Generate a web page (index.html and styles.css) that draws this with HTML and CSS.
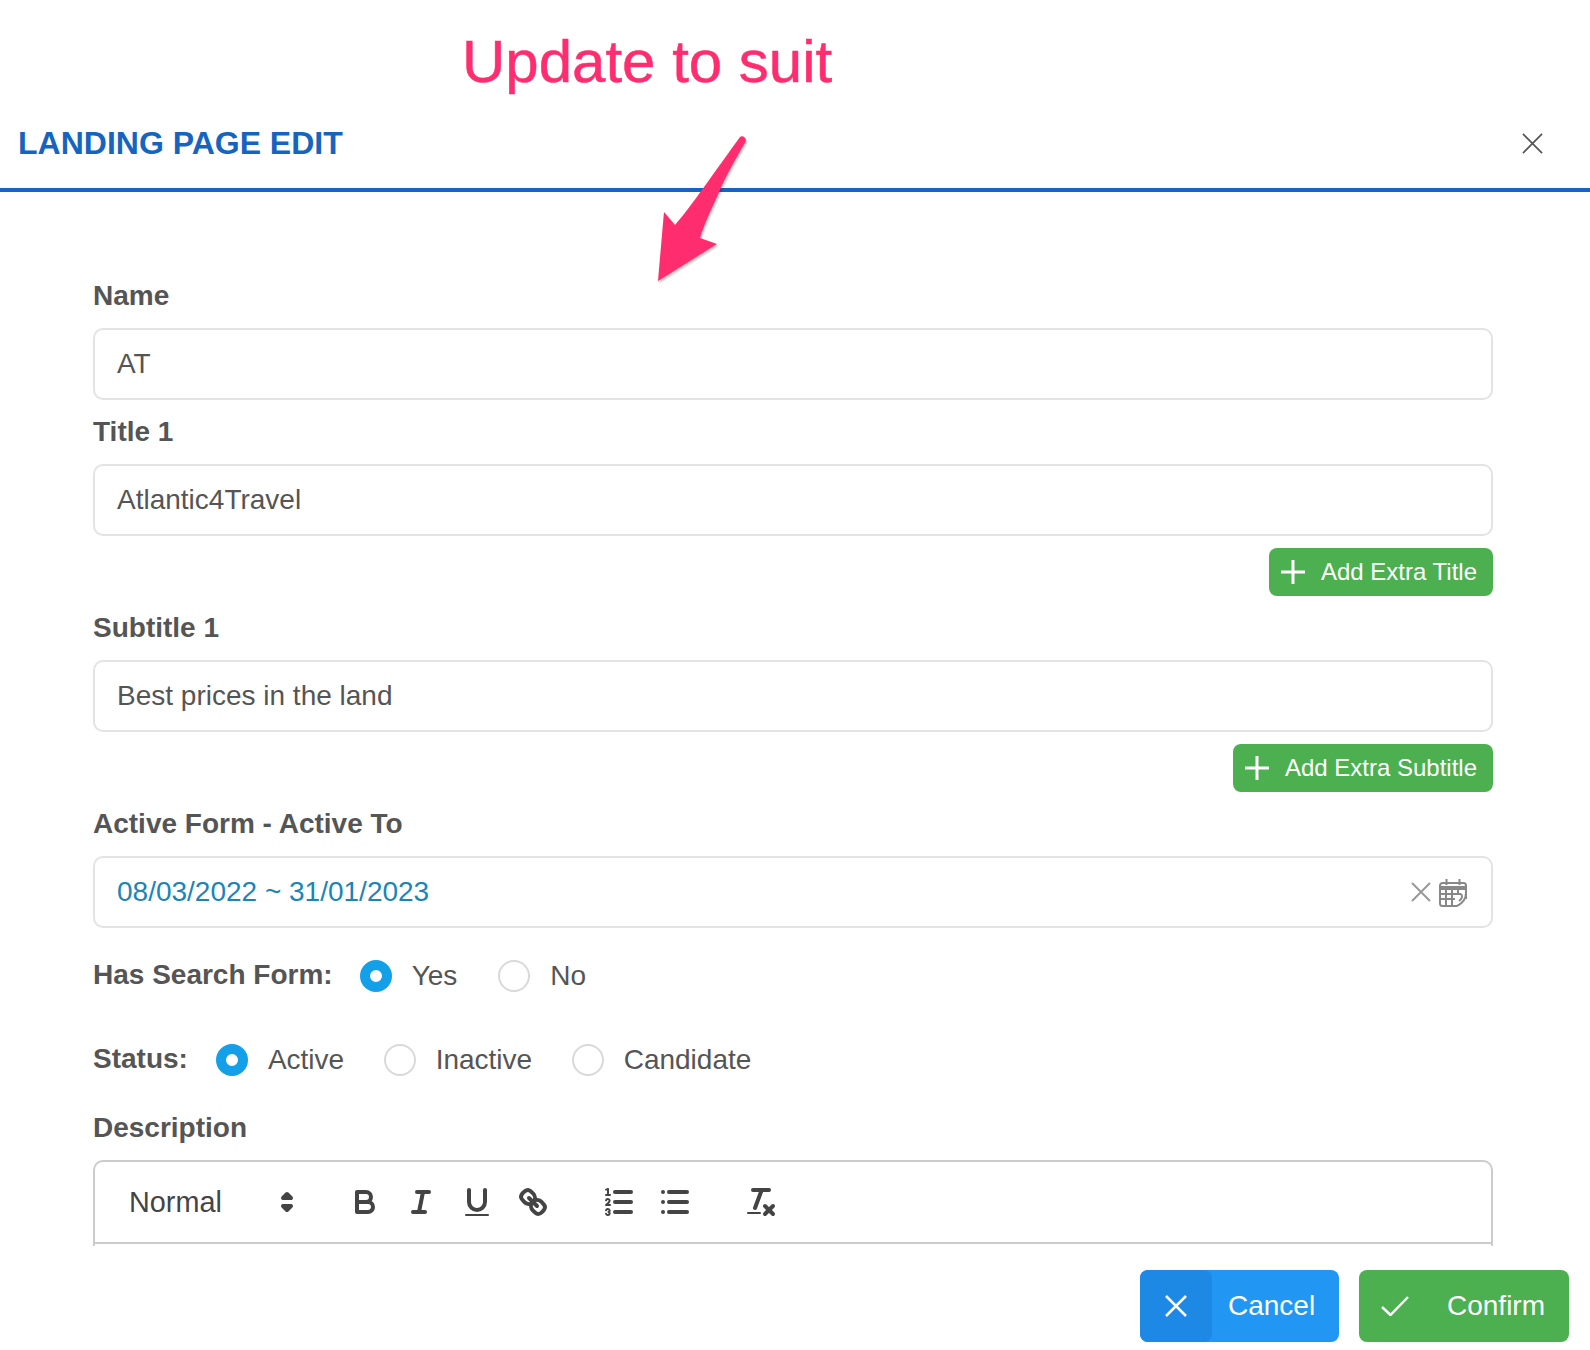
FILE: index.html
```html
<!DOCTYPE html>
<html lang="en">
<head>
<meta charset="utf-8">
<title>Landing Page Edit</title>
<link rel="stylesheet" href="styles.css">
</head>
<body>
<div class="dialog">
  <header class="head">
    <h1 class="head-title">LANDING PAGE EDIT</h1>
    <svg class="head-close" viewBox="0 0 22 22"><path d="M1 1L21 21M21 1L1 21"/></svg>
  </header>
  <main class="body">
    <div class="field-label first">Name</div>
    <div class="input">AT</div>
    <div class="field-label">Title 1</div>
    <div class="input">Atlantic4Travel</div>
    <div class="add-row"><button class="add-btn"><svg class="plus" viewBox="0 0 24 24"><path d="M0 12H24M12 0V24"/></svg>Add Extra Title</button></div>
    <div class="field-label">Subtitle 1</div>
    <div class="input">Best prices in the land</div>
    <div class="add-row"><button class="add-btn"><svg class="plus" viewBox="0 0 24 24"><path d="M0 12H24M12 0V24"/></svg>Add Extra Subtitle</button></div>
    <div class="field-label">Active Form - Active To</div>
    <div class="input date">
      <span class="date-value">08/03/2022 ~ 31/01/2023</span>
      <svg class="date-clear" viewBox="0 0 20 20"><path d="M1 1L19 19M19 1L1 19"/></svg>
      <svg class="date-cal" viewBox="0 0 28 28">
        <path d="M18 27H3.500A2.500 2.500 0 0 1 1 24.500V6.500A2.500 2.500 0 0 1 3.500 4H24.500A2.500 2.500 0 0 1 27 6.500V20"/>
        <path d="M7.500 0V6M20.500 0V6M1 8H27M1 10H27M7 10V26M13 10V26M19 10V15M2 15H22M2 20H16M27 14C27 19 24 24 18 27M22 15C24 17 23 20 20 22"/>
      </svg>
    </div>
    <div class="radio-row row-search">
      <span class="radio-title">Has Search Form:</span>
      <span class="radio on"></span><span class="radio-text">Yes</span>
      <span class="radio"></span><span class="radio-text">No</span>
    </div>
    <div class="radio-row row-status">
      <span class="radio-title">Status:</span>
      <span class="radio on"></span><span class="radio-text">Active</span>
      <span class="radio"></span><span class="radio-text">Inactive</span>
      <span class="radio"></span><span class="radio-text">Candidate</span>
    </div>
    <div class="field-label desc">Description</div>
    <div class="editor">
      <div class="toolbar">
        <span class="picker">Normal
          <svg class="q picker-arrow" viewBox="0 0 18 18"><polygon class="s" points="7 11 9 13 11 11 7 11"/><polygon class="s" points="7 7 9 5 11 7 7 7"/></svg>
        </span>
        <span class="group">
          <span class="tool"><svg class="q" viewBox="0 0 18 18"><path class="s" d="M5,4H9.5A2.5,2.5,0,0,1,12,6.5v0A2.5,2.5,0,0,1,9.5,9H5V4Z"/><path class="s" d="M5,9h5.5A2.5,2.5,0,0,1,13,11.5v0A2.5,2.5,0,0,1,10.5,14H5V9Z"/></svg></span>
          <span class="tool"><svg class="q" viewBox="0 0 18 18"><line class="s" x1="7" x2="13" y1="4" y2="4"/><line class="s" x1="5" x2="11" y1="14" y2="14"/><line class="s" x1="8" x2="10" y1="14" y2="4"/></svg></span>
          <span class="tool"><svg class="q" viewBox="0 0 18 18"><path class="s" d="M5,3V9a4.012,4.012,0,0,0,4,4H9a4.012,4.012,0,0,0,4-4V3"/><rect class="f" height="1" rx="0.5" ry="0.5" width="12" x="3" y="15"/></svg></span>
          <span class="tool"><svg class="q" viewBox="0 0 18 18"><line class="s" x1="7" x2="11" y1="7" y2="11"/><path class="s" d="M8.9,4.577a3.476,3.476,0,0,1,.36,4.679A3.476,3.476,0,0,1,4.577,8.9C3.185,7.5,2.035,6.4,4.217,4.217S7.5,3.185,8.9,4.577Z"/><path class="s" d="M13.423,9.1a3.476,3.476,0,0,0-4.679-.36,3.476,3.476,0,0,0,.36,4.679c1.392,1.392,2.5,2.542,4.679.36S14.815,10.5,13.423,9.1Z"/></svg></span>
        </span>
        <span class="group">
          <span class="tool"><svg class="q" viewBox="0 0 18 18"><line class="s" x1="7" x2="15" y1="4" y2="4"/><line class="s" x1="7" x2="15" y1="9" y2="9"/><line class="s" x1="7" x2="15" y1="14" y2="14"/><line class="s t" x1="2.5" x2="4.5" y1="5.5" y2="5.5"/><path class="f" d="M3.5,6A0.5,0.5,0,0,1,3,5.5V3.085l-0.276.138A0.5,0.5,0,0,1,2.053,3c-0.124-.247-0.023-0.324.224-0.447l1-.5A0.5,0.5,0,0,1,4,2.5v3A0.5,0.5,0,0,1,3.5,6Z"/><path class="s t" d="M4.5,10.5h-2c0-.234,1.85-1.076,1.85-2.234A0.959,0.959,0,0,0,2.5,8.156"/><path class="s t" d="M2.5,14.846a0.959,0.959,0,0,0,1.85-.109A0.7,0.7,0,0,0,3.75,14a0.688,0.688,0,0,0,.6-0.736,0.959,0.959,0,0,0-1.85-.109"/></svg></span>
          <span class="tool"><svg class="q" viewBox="0 0 18 18"><line class="s" x1="6" x2="15" y1="4" y2="4"/><line class="s" x1="6" x2="15" y1="9" y2="9"/><line class="s" x1="6" x2="15" y1="14" y2="14"/><line class="s" x1="3" x2="3" y1="4" y2="4"/><line class="s" x1="3" x2="3" y1="9" y2="9"/><line class="s" x1="3" x2="3" y1="14" y2="14"/></svg></span>
        </span>
        <span class="group">
          <span class="tool"><svg class="q" viewBox="0 0 18 18"><line class="s" x1="5" x2="13" y1="3" y2="3"/><line class="s" x1="6" x2="9.35" y1="12" y2="3"/><line class="s" x1="11" x2="15" y1="11" y2="15"/><line class="s" x1="15" x2="11" y1="11" y2="15"/><rect class="f" height="1" rx="0.5" ry="0.5" width="7" x="2" y="14"/></svg></span>
        </span>
      </div>
    </div>
  </main>
  <footer class="foot">
    <button class="action cancel"><span class="action-icon"><svg viewBox="0 0 22 22"><path d="M1 1L21 21M21 1L1 21"/></svg></span><span class="action-text">Cancel</span></button>
    <button class="action confirm"><span class="action-icon"><svg viewBox="0 0 28 20"><path d="M1 11L9.500 19L27 1"/></svg></span><span class="action-text">Confirm</span></button>
  </footer>
</div>
<div class="note">Update to suit</div>
<svg class="note-arrow" viewBox="0 0 100 160"><path d="M100 17C102 15 106 17 106 21C96 38 84 60 80 70C72 88 64 104 60 118L77 124L18 161L24 92L35 105C50 88 76 50 100 17Z"/></svg>
</body>
</html>
```
FILE: styles.css
```css
* { box-sizing: border-box; }
html, body { margin: 0; padding: 0; background: #fff; }
body { width: 1590px; height: 1350px; overflow: hidden; position: relative; font-family: "Liberation Sans", Arial, sans-serif; color: #555; }
.dialog { display: flex; flex-direction: column; height: 1350px; }
.head { height: 192px; flex: none; border-bottom: 4px solid #1565c0; display: flex; align-items: center; justify-content: space-between; padding: 98px 47px 0 18px; }
.head-title { margin: 0; font-size: 32px; line-height: 36px; font-weight: 700; color: #1565c0; }
.head-close { width: 21px; height: 21px; fill: none; stroke: #555; stroke-width: 1.800; }
.body { height: 1054px; flex: none; overflow: hidden; padding: 70px 97px 0 93px; }
.field-label { font-size: 28px; line-height: 32px; font-weight: 700; margin: 16px 0; }
.field-label.first { margin-top: 18px; }
.input { height: 72px; border: 2px solid #e3e3e3; border-radius: 10px; padding: 0 22px; font-size: 28px; line-height: 68px; color: #555; }
.add-row { display: flex; justify-content: flex-end; margin-top: 12px; }
.add-btn { height: 48px; border: 0; border-radius: 8px; background: #4caf50; color: #fff; font: 24px "Liberation Sans", Arial, sans-serif; padding: 0 16px 0 12px; display: flex; align-items: center; gap: 16px; }
.plus { width: 24px; height: 24px; fill: none; stroke: #fff; stroke-width: 3; }
.date { display: flex; align-items: center; }
.date-value { flex: 1; color: #1b85b8; }
.date-clear { width: 20px; height: 20px; fill: none; stroke: #999; stroke-width: 2; margin-right: 8px; }
.date-cal { width: 28px; height: 28px; fill: none; stroke: #888; stroke-width: 2; margin-right: 2px; margin-top: 2px; }
.radio-row { display: flex; align-items: center; font-size: 28px; height: 32px; }
.row-search { margin-top: 32px; }
.row-status { margin-top: 52px; }
.radio-title { font-weight: 700; line-height: 32px; padding-bottom: 3px; margin-right: 27px; }
.row-status .radio-title { margin-right: 28px; }
.radio { width: 32px; height: 32px; flex: none; border-radius: 50%; border: 2px solid #d9d9d9; background: #fff; margin-right: 20px; }
.radio.on { border: 10px solid #14a0e8; }
.radio-text { margin-right: 41px; line-height: 32px; }
.row-status .radio-text { margin-right: 39.500px; }
.field-label.desc { margin-top: 36px; }
.editor { border: 2px solid #ccc; border-radius: 10px 10px 0 0; height: 120px; }
.toolbar { display: flex; align-items: center; padding: 16px; border-bottom: 2px solid #ccc; box-sizing: content-box; height: 48px; }
.picker { width: 196px; height: 48px; padding: 0 2px 0 18px; line-height: 48px; font-size: 28.800px; color: #444; display: flex; justify-content: space-between; align-items: center; margin-right: 30px; }
.group { display: flex; margin-right: 30px; }
.tool { width: 56px; height: 48px; padding: 6px 10px; }
.q { width: 36px; height: 36px; display: block; }
.picker-arrow { flex: none; }
.s { fill: none; stroke: #444; stroke-width: 2; stroke-linecap: round; stroke-linejoin: round; }
.s.t { stroke-width: 1; }
.f { fill: #444; }
.foot { flex: 1; display: flex; justify-content: flex-end; align-items: flex-start; gap: 20px; padding: 24px 21px 0 0; }
.action { height: 72px; border: 0; border-radius: 8px; display: flex; align-items: center; padding: 0; color: #fff; font: 28px "Liberation Sans", Arial, sans-serif; overflow: hidden; }
.action-icon { width: 72px; height: 72px; display: flex; align-items: center; justify-content: center; flex: none; }
.action-icon svg { fill: none; stroke: #fff; stroke-width: 2.500; }
.cancel { width: 199px; background: #2196f3; }
.cancel .action-icon { background: #1e88e5; border-radius: 0 8px 8px 0; }
.cancel .action-icon svg { width: 22px; height: 22px; }
.cancel .action-text { padding-left: 16px; }
.confirm { width: 210px; background: #4caf50; }
.confirm .action-icon svg { width: 28px; height: 20px; }
.confirm .action-text { padding-left: 16px; }
.note { position: absolute; left: 462px; top: 28px; font-size: 60px; line-height: 68px; color: #ff2d6f; -webkit-text-stroke: 0.500px #ff2d6f; }
.note-arrow { position: absolute; left: 640px; top: 120px; width: 100px; height: 160px; overflow: visible; fill: #ff2d6f; filter: drop-shadow(1px 2px 1px rgba(0,0,0,.25)); }
```
